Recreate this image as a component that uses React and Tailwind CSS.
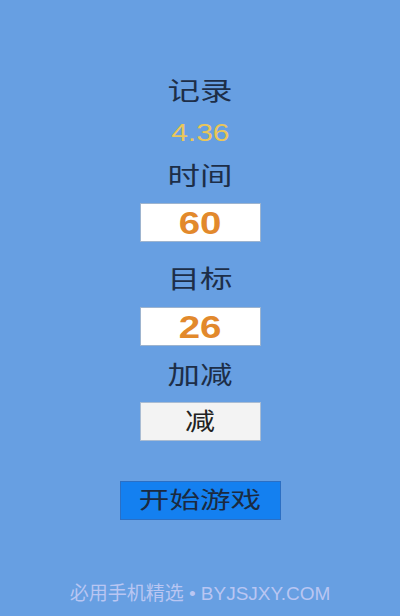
import { useState } from "react";

export default function App() {
  const [time, setTime] = useState("60");
  const [target, setTarget] = useState("26");
  const [mode, setMode] = useState("减");

  return (
    <div
      className="min-h-[616px] w-[400px] bg-[#679fe2] flex flex-col items-center text-[#1d2e48]"
      style={{ fontFamily: '"Liberation Sans", "Noto Sans CJK SC", sans-serif' }}
    >
      <div className="mt-[75px] h-[32px] leading-[32px] text-[25px] scale-x-[1.3]">记录</div>
      <div className="mt-[10px] h-[32px] leading-[32px] text-[24px] text-[#eac659] scale-x-[1.25]">4.36</div>
      <div className="mt-[11px] h-[32px] leading-[32px] text-[25px] scale-x-[1.3]">时间</div>
      <div className="mt-[11px] w-[121px] h-[39px] bg-white border border-[#9db4cf] flex items-center justify-center">
        <input
          value={time}
          onChange={(e) => setTime(e.target.value)}
          className="w-[100px] text-center text-[32px] font-semibold text-[#e2892c] outline-none scale-x-[1.2]"
        />
      </div>
      <div className="mt-[21px] h-[32px] leading-[32px] text-[25px] scale-x-[1.3]">目标</div>
      <div className="mt-[12px] w-[121px] h-[39px] bg-white border border-[#9db4cf] flex items-center justify-center">
        <input
          value={target}
          onChange={(e) => setTarget(e.target.value)}
          className="w-[100px] text-center text-[32px] font-semibold text-[#e2892c] outline-none scale-x-[1.2]"
        />
      </div>
      <div className="mt-[13px] h-[32px] leading-[32px] text-[25px] scale-x-[1.3]">加减</div>
      <button
        onClick={() => setMode(mode === "减" ? "加" : "减")}
        className="mt-[11px] w-[121px] h-[39px] bg-[#f3f3f3] border border-[#a9bcd3] text-[24px] text-[#222]"
      >
        <span className="inline-block scale-x-[1.25]">{mode}</span>
      </button>
      <button className="mt-[40px] w-[161px] h-[39px] bg-[#1480f0] border border-[#2b6fc4] text-[23px] text-[#1b2a40]">
        <span className="inline-block scale-x-[1.33]">开始游戏</span>
      </button>
      <div className="mt-auto mb-[10px] h-[24px] leading-[24px] text-[19px] text-[#b9c6f2]">
        必用手机精选 • BYJSJXY.COM
      </div>
    </div>
  );
}
